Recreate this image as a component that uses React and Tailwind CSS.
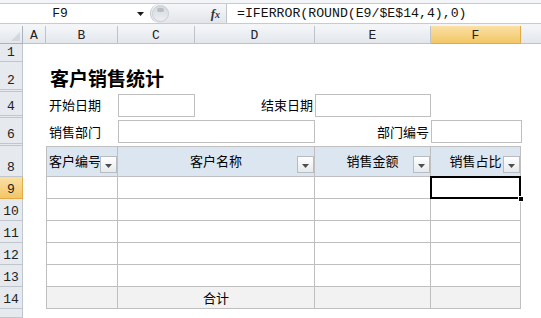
import React from "react";

const MONO = "font-['Liberation_Mono','DejaVu_Sans_Mono',monospace]";
const CJK = "font-['Noto_Sans_CJK_SC','Noto_Sans',sans-serif]";

function Tri({ color = "#222", w = 7, h = 4 }) {
  return (
    <svg width={w} height={h} viewBox={`0 0 ${w} ${h}`}>
      <path d={`M0 0H${w}L${w / 2} ${h}Z`} fill={color} />
    </svg>
  );
}

function DropBtn() {
  return (
    <div className="absolute right-0 bottom-[3px] w-[17px] h-[17px] border border-[#b7bcc2] bg-gradient-to-b from-white to-[#e6e9ec] flex items-center justify-center pt-[3px]">
      <Tri color="#4d4d4d" w={7} h={4} />
    </div>
  );
}

const colHeaders = [
  ["A", "w-[23px]", false],
  ["B", "w-[72px]", false],
  ["C", "w-[77px]", false],
  ["D", "w-[120px]", false],
  ["E", "w-[116px]", false],
  ["F", "w-[90px]", true],
];

const rowHeaders = [
  ["h-[18px]", "1", false],
  ["h-[28px]", "2", false],
  ["h-[2px]", "", false],
  ["h-[24px]", "4", false],
  ["h-[2px]", "", false],
  ["h-[26px]", "6", false],
  ["h-[2px]", "", false],
  ["h-[31px]", "8", false],
  ["h-[22px]", "9", true],
  ["h-[22px]", "10", false],
  ["h-[22px]", "11", false],
  ["h-[22px]", "12", false],
  ["h-[22px]", "13", false],
  ["h-[22px]", "14", false],
  ["h-[9px]", "", false],
];

const dataRows = ["row-start-9", "row-start-10", "row-start-11", "row-start-12", "row-start-13"];

const cellB = "col-start-2 border-l border-r border-b border-[#bfbfbf]";
const cellCD = "col-start-3 col-span-2 border-r border-b border-[#bfbfbf]";
const cellE = "col-start-5 border-r border-b border-[#bfbfbf]";
const cellF = "col-start-6 border-r border-b border-[#bfbfbf]";

export default function App() {
  return (
    <div className={`w-[541px] h-[318px] overflow-hidden bg-white text-black ${CJK}`}>
      {/* Formula bar */}
      <div className="h-[26px] bg-[#f3f5f8] pt-[3px] pb-[2px]">
        <div className="h-[21px] flex bg-white border-y border-[#c5cbd2]">
          <div className="w-[150px] flex items-center">
            <div className={`w-[120px] text-center text-[13px] leading-none text-[#111] ${MONO}`}>F9</div>
            <div className="ml-[17px] flex items-center">
              <Tri color="#1a1a1a" w={7} h={4} />
            </div>
          </div>
          <div className="w-[77px] h-full flex items-center rounded-l-full border-l border-r border-[#c0c6cd] bg-gradient-to-b from-[#f6f7f9] to-[#e2e5e9]">
            <div className="w-[17px] h-[17px] ml-[1px] rounded-full bg-gradient-to-b from-[#d6dade] to-[#eceef1] border border-[#c9ced3] flex justify-center pt-[2px]">
              <div className="w-[7px] h-[4px] rounded-full bg-[#b9bec4]" />
            </div>
            <div className="ml-auto mr-[6px] text-[13px] italic font-bold font-['Liberation_Serif',serif] text-[#333] leading-none">
              f<span className="text-[10px]">x</span>
            </div>
          </div>
          <div className={`flex-1 flex items-center pl-[10px] text-[13.2px] leading-none text-[#111] ${MONO}`}>
            =IFERROR(ROUND(E9/$E$14,4),0)
          </div>
        </div>
      </div>

      {/* Column headers */}
      <div className={`h-[18px] flex ${MONO} text-[13px] text-[#222]`}>
        <div className="w-[23px] h-full bg-gradient-to-b from-[#f4f6f8] to-[#e3e7ec] border-r border-b border-[#aab3bd] flex items-end justify-end p-[2px]">
          <svg width="9" height="9" viewBox="0 0 9 9">
            <path d="M9 0V9H0Z" fill="#d3d8de" />
          </svg>
        </div>
        {colHeaders.map(([l, w, sel]) => (
          <div
            key={l}
            className={`${w} h-full flex items-center justify-center pt-[2px] border-r border-b ${
              sel
                ? "bg-gradient-to-b from-[#fae0a4] to-[#f3c666] border-[#e2ab45]"
                : "bg-gradient-to-b from-[#f4f6f8] to-[#e3e7ec] border-[#bcc3cb]"
            }`}
          >
            {l}
          </div>
        ))}
        <div className="flex-1 h-full bg-gradient-to-b from-[#f4f6f8] to-[#e3e7ec] border-b border-[#bcc3cb]" />
      </div>

      {/* Body */}
      <div className="flex">
        {/* Row headers */}
        <div className={`w-[23px] flex flex-col ${MONO} text-[13px] text-[#222]`}>
          {rowHeaders.map(([h, l, sel], i) => (
            <div
              key={i}
              className={`${h} overflow-hidden flex items-end justify-center leading-none border-b border-r ${
                sel
                  ? "bg-gradient-to-b from-[#fae0a4] to-[#f3c666] border-[#e2ab45]"
                  : "bg-[#e6e9ee] border-[#bfc6ce]"
              } ${h === "h-[2px]" ? "pb-0" : "pb-[2px]"}`}
            >
              {l}
            </div>
          ))}
        </div>

        {/* Cells */}
        <div className="flex-1 grid grid-cols-[23px_72px_77px_120px_116px_90px_1fr] grid-rows-[18px_28px_2px_24px_2px_26px_2px_31px_22px_22px_22px_22px_22px_22px_9px] text-[13px]">
          {/* Title */}
          <div className="col-start-2 col-span-4 row-start-2 flex items-center pl-[4px] pt-[2px] text-[19px] font-bold leading-none whitespace-nowrap">
            客户销售统计
          </div>

          {/* Row 4 */}
          <div className="col-start-2 row-start-4 flex items-center pl-[3px] pt-[2px] whitespace-nowrap">开始日期</div>
          <div className="col-start-3 row-start-4">
            <div className="mt-[2px] h-[23px] border border-[#bfbfbf]" />
          </div>
          <div className="col-start-4 row-start-4 flex items-center justify-end pr-[2px] pt-[2px] whitespace-nowrap">结束日期</div>
          <div className="col-start-5 row-start-4">
            <div className="mt-[2px] h-[23px] border border-[#bfbfbf]" />
          </div>

          {/* Row 6 */}
          <div className="col-start-2 row-start-6 flex items-center pl-[3px] pt-[2px] whitespace-nowrap">销售部门</div>
          <div className="col-start-3 col-span-2 row-start-6">
            <div className="mt-[2px] h-[23px] border border-[#bfbfbf]" />
          </div>
          <div className="col-start-5 row-start-6 flex items-center justify-end pr-[2px] pt-[2px] whitespace-nowrap">部门编号</div>
          <div className="col-start-6 row-start-6">
            <div className="mt-[2px] h-[23px] -mr-[1px] border border-[#bfbfbf]" />
          </div>

          {/* Header row 8 */}
          <div className={`${cellB} row-start-8 border-t relative bg-[#dce6f1] flex items-center pl-[2px] pb-[1px] whitespace-nowrap`}>
            客户编号
            <DropBtn />
          </div>
          <div className={`${cellCD} row-start-8 border-t relative bg-[#dce6f1] flex items-center justify-center pb-[1px]`}>
            客户名称
            <DropBtn />
          </div>
          <div className={`${cellE} row-start-8 border-t relative bg-[#dce6f1] flex items-center justify-center pb-[1px]`}>
            销售金额
            <DropBtn />
          </div>
          <div className={`${cellF} row-start-8 border-t relative bg-[#dce6f1] flex items-center justify-center pb-[1px] whitespace-nowrap`}>
            销售占比
            <DropBtn />
          </div>

          {/* Data rows */}
          {dataRows.map((r, i) => (
            <React.Fragment key={r}>
              <div className={`${cellB} ${r}`} />
              <div className={`${cellCD} ${r}`} />
              <div className={`${cellE} ${r}`} />
              <div className={`${cellF} ${r} ${i === 0 ? "relative" : ""}`}>
                {i === 0 && (
                  <>
                    <div className="absolute -left-[1px] -top-[1px] -right-[1px] -bottom-[1px] border-2 border-black" />
                    <div className="absolute -right-[4px] -bottom-[4px] w-[6px] h-[6px] bg-black border border-white" />
                  </>
                )}
              </div>
            </React.Fragment>
          ))}

          {/* Total row */}
          <div className={`${cellB} row-start-14 bg-[#f2f2f2]`} />
          <div className={`${cellCD} row-start-14 bg-[#f2f2f2] flex items-center justify-center`}>合计</div>
          <div className={`${cellE} row-start-14 bg-[#f2f2f2]`} />
          <div className={`${cellF} row-start-14 bg-[#f2f2f2]`} />
        </div>
      </div>
    </div>
  );
}
